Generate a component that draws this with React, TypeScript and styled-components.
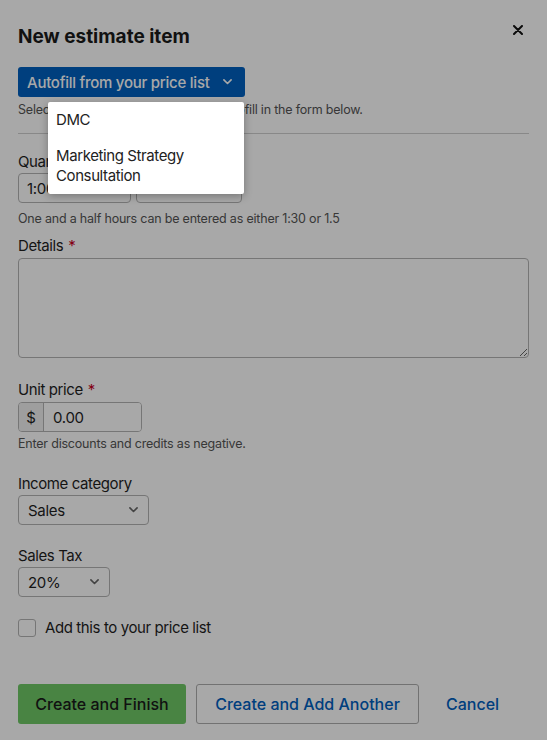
import React from "react";
import styled, { createGlobalStyle } from "styled-components";

const Global = createGlobalStyle`
  html, body { margin: 0; padding: 0; background: #fff; }
  body { font-family: Inter, "Noto Sans", Arial, sans-serif; color: #1f1f1f; }
  * { box-sizing: border-box; }
`;

const Page = styled.div`
  position: relative;
  width: 547px;
  min-height: 740px;
  padding: 24px 18px 17px;
  background: #fff;
`;

const Header = styled.div`
  display: flex;
  justify-content: space-between;
  align-items: flex-start;
`;

const Title = styled.h1`
  margin: 0;
  font-size: 19px;
  line-height: 26px;
  font-weight: 700;
  color: #1a1a1a;
`;

const Close = styled.button`
  border: 0;
  background: none;
  padding: 0;
  margin: 0 5px 0 0;
  width: 12px;
  height: 12px;
  display: flex;
  align-items: center;
  justify-content: center;
  color: #222;
  cursor: pointer;
`;

const AutofillWrap = styled.div`
  position: relative;
  margin-top: 17px;
  display: inline-block;
`;

const AutofillButton = styled.button`
  display: flex;
  align-items: center;
  gap: 13px;
  height: 30px;
  padding: 0 13px 0 9px;
  border: 0;
  border-radius: 3px;
  background: #0060c0;
  color: #fff;
  font-family: inherit;
  font-size: 15px;
  font-weight: 500;
  letter-spacing: -0.25px;
  cursor: pointer;
`;

const Menu = styled.ul`
  position: absolute;
  z-index: 10;
  top: 35px;
  left: 30px;
  width: 196px;
  margin: 0;
  padding: 0;
  list-style: none;
  background: #fff;
  border-radius: 2px;
  box-shadow: 0 2px 8px rgba(0, 0, 0, 0.3);
`;

const MenuItem = styled.li`
  padding: 8px;
  font-size: 15px;
  line-height: 20px;
  letter-spacing: -0.4px;
  color: #222;
`;

const Help = styled.p<{ $mt?: number }>`
  margin: ${(p) => p.$mt ?? 4}px 0 0;
  font-size: 12.5px;
  line-height: 18px;
  letter-spacing: -0.2px;
  color: #555;
`;

const Divider = styled.hr`
  margin: 14px 0 0;
  border: 0;
  border-top: 1px solid #cfcfcf;
`;

const Label = styled.label<{ $mt: number }>`
  display: block;
  margin-top: ${(p) => p.$mt}px;
  font-size: 15px;
  line-height: 20px;
  letter-spacing: -0.4px;
  color: #1f1f1f;
`;

const Req = styled.span`
  color: #c8001e;
  margin-left: 5px;
`;

const Row = styled.div<{ $mt?: number }>`
  display: flex;
  gap: 5px;
  margin-top: ${(p) => p.$mt ?? 1}px;
`;

const Input = styled.input<{ $w: number }>`
  width: ${(p) => p.$w}px;
  height: 30px;
  padding: 0 8px;
  border: 1px solid #b3b3b3;
  border-radius: 4px;
  font-family: inherit;
  font-size: 15px;
  letter-spacing: -0.3px;
  color: #1f1f1f;
  background: #fff;
`;

const TextArea = styled.textarea`
  display: block;
  width: 100%;
  height: 100px;
  margin-top: 2px;
  border: 1px solid #b3b3b3;
  border-radius: 4px;
  resize: vertical;
  font-family: inherit;
  background: #fff;
`;

const Group = styled.div`
  display: flex;
  width: 124px;
  height: 30px;
  margin-top: 2px;
  border: 1px solid #b3b3b3;
  border-radius: 4px;
  overflow: hidden;
`;

const Addon = styled.span`
  width: 25px;
  display: flex;
  align-items: center;
  justify-content: center;
  background: #f0f0f0;
  border-right: 1px solid #b3b3b3;
  font-size: 15px;
  color: #1f1f1f;
`;

const GroupInput = styled.input`
  flex: 1;
  min-width: 0;
  border: 0;
  padding: 0 9px;
  font-family: inherit;
  font-size: 15px;
  letter-spacing: -0.3px;
  color: #1f1f1f;
  background: #fff;
`;

const Select = styled.div<{ $w: number }>`
  display: flex;
  align-items: center;
  justify-content: space-between;
  width: ${(p) => p.$w}px;
  height: 30px;
  margin-top: 1px;
  padding: 0 10px 0 9px;
  border: 1px solid #b3b3b3;
  border-radius: 4px;
  background: #fff;
  font-size: 15px;
  letter-spacing: -0.3px;
  color: #1f1f1f;
`;

const CheckRow = styled.label`
  display: flex;
  align-items: center;
  gap: 9px;
  margin-top: 21px;
  font-size: 15px;
  line-height: 20px;
  letter-spacing: -0.4px;
  color: #1f1f1f;
`;

const Box = styled.span`
  width: 18px;
  height: 18px;
  border: 1px solid #b3b3b3;
  border-radius: 3px;
  background: #fff;
`;

const Footer = styled.div`
  display: flex;
  align-items: center;
  gap: 10px;
  margin-top: 46px;
`;

const Btn = styled.button<{ $kind: "primary" | "outline" | "link" }>`
  height: 40px;
  border-radius: 3px;
  font-family: inherit;
  font-size: 16px;
  font-weight: 500;
  cursor: pointer;
  border: 1px solid
    ${(p) => (p.$kind === "outline" ? "#adadad" : "transparent")};
  background: ${(p) => (p.$kind === "primary" ? "#6fc867" : p.$kind === "outline" ? "#fff" : "transparent")};
  color: ${(p) => (p.$kind === "primary" ? "#1a1a1a" : "#0060c0")};
  width: ${(p) => (p.$kind === "primary" ? "168px" : p.$kind === "outline" ? "223px" : "auto")};
  padding: ${(p) => (p.$kind === "link" ? "0 16px" : "0")};
`;

const Overlay = styled.div`
  position: absolute;
  inset: 0;
  z-index: 5;
  background: rgba(0, 0, 0, 0.34);
`;

const Chevron = ({ size = 10, color = "currentColor" }: { size?: number; color?: string }) => (
  <svg width={size} height={size * 0.6} viewBox="0 0 10 6" fill="none">
    <path d="M1 1l4 4 4-4" stroke={color} strokeWidth="1.8" strokeLinecap="round" strokeLinejoin="round" />
  </svg>
);

export default function App() {
  return (
    <>
      <Global />
      <Page>
        <Header>
          <Title>New estimate item</Title>
          <Close aria-label="Close">
            <svg width="10" height="10" viewBox="0 0 10 10">
              <path d="M1 1l8 8M9 1l-8 8" stroke="#111" strokeWidth="2" strokeLinecap="round" />
            </svg>
          </Close>
        </Header>

        <AutofillWrap>
          <AutofillButton>
            Autofill from your price list
            <Chevron size={9} />
          </AutofillButton>
          <Menu>
            <MenuItem>DMC</MenuItem>
            <MenuItem>Marketing Strategy Consultation</MenuItem>
          </Menu>
        </AutofillWrap>
        <Help>Select an item from the price list to autofill in the form below.</Help>
        <Divider />

        <Label $mt={18}>Quantity</Label>
        <Row>
          <Input $w={113} defaultValue="1:00" />
          <Input $w={106} defaultValue="" />
        </Row>
        <Help $mt={7}>One and a half hours can be entered as either 1:30 or 1.5</Help>

        <Label $mt={8}>
          Details<Req>*</Req>
        </Label>
        <TextArea />

        <Label $mt={22}>
          Unit price<Req>*</Req>
        </Label>
        <Group>
          <Addon>$</Addon>
          <GroupInput defaultValue="0.00" />
        </Group>
        <Help $mt={3}>Enter discounts and credits as negative.</Help>

        <Label $mt={21}>Income category</Label>
        <Select $w={131}>
          Sales
          <Chevron size={9} color="#666" />
        </Select>

        <Label $mt={21}>Sales Tax</Label>
        <Select $w={92}>
          20%
          <Chevron size={9} color="#666" />
        </Select>

        <CheckRow>
          <Box />
          Add this to your price list
        </CheckRow>

        <Footer>
          <Btn $kind="primary">Create and Finish</Btn>
          <Btn $kind="outline">Create and Add Another</Btn>
          <Btn $kind="link">Cancel</Btn>
        </Footer>

        <Overlay />
      </Page>
    </>
  );
}
